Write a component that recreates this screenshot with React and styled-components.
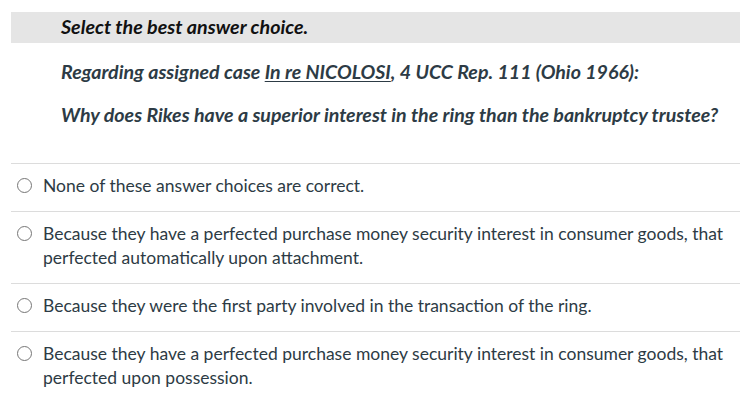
import React from 'react'
import styled, { createGlobalStyle } from 'styled-components'

const GlobalStyle = createGlobalStyle`
  body {
    margin: 0;
    background: #ffffff;
    font-family: Lato, "Liberation Sans", sans-serif;
    color: #2d3b45;
  }
`

const Quiz = styled.div`
  margin: 12px 7px 0 11px;
`

const Banner = styled.div`
  background: #e5e5e5;
  height: 31px;
  box-sizing: border-box;
  padding: 2px 0 0 50px;
  font-size: 19.7px;
  line-height: 25px;
  font-weight: 700;
  font-style: italic;
  color: #111;
`

const Prompt = styled.div`
  padding: 16px 0 36px 50px;
  display: flex;
  flex-direction: column;
  gap: 18px;
  font-size: 19.6px;
  font-weight: 700;
  font-style: italic;
  line-height: 25px;

  u {
    text-decoration: underline;
    text-decoration-thickness: 1px;
    text-underline-offset: 2px;
  }
`

const Choices = styled.div`
  border-top: 1px solid #dcdcdc;
`

const Choice = styled.label`
  display: flex;
  align-items: flex-start;
  gap: 11px;
  padding: 10px 0 13px 6px;
  border-bottom: 1px solid #dcdcdc;
  font-size: 17.5px;
  line-height: 24px;
  cursor: pointer;

  &:last-child {
    border-bottom: none;
  }
`

const Radio = styled.span`
  flex: none;
  width: 15px;
  height: 15px;
  margin-top: 4px;
  box-sizing: border-box;
  border: 1.5px solid #767676;
  border-radius: 50%;
  background: #fff;
`

const choices = [
  'None of these answer choices are correct.',
  'Because they have a perfected purchase money security interest in consumer goods, that perfected automatically upon attachment.',
  'Because they were the first party involved in the transaction of the ring.',
  'Because they have a perfected purchase money security interest in consumer goods, that perfected upon possession.',
]

export default function App() {
  return (
    <>
      <GlobalStyle />
      <Quiz>
        <Banner>Select the best answer choice.</Banner>
        <Prompt>
          <div>
            Regarding assigned case <u>In re NICOLOSI</u>, 4 UCC Rep. 111 (Ohio 1966):
          </div>
          <div>Why does Rikes have a superior interest in the ring than the bankruptcy trustee?</div>
        </Prompt>
        <Choices>
          {choices.map((text) => (
            <Choice key={text}>
              <Radio />
              <span>{text}</span>
            </Choice>
          ))}
        </Choices>
      </Quiz>
    </>
  )
}
